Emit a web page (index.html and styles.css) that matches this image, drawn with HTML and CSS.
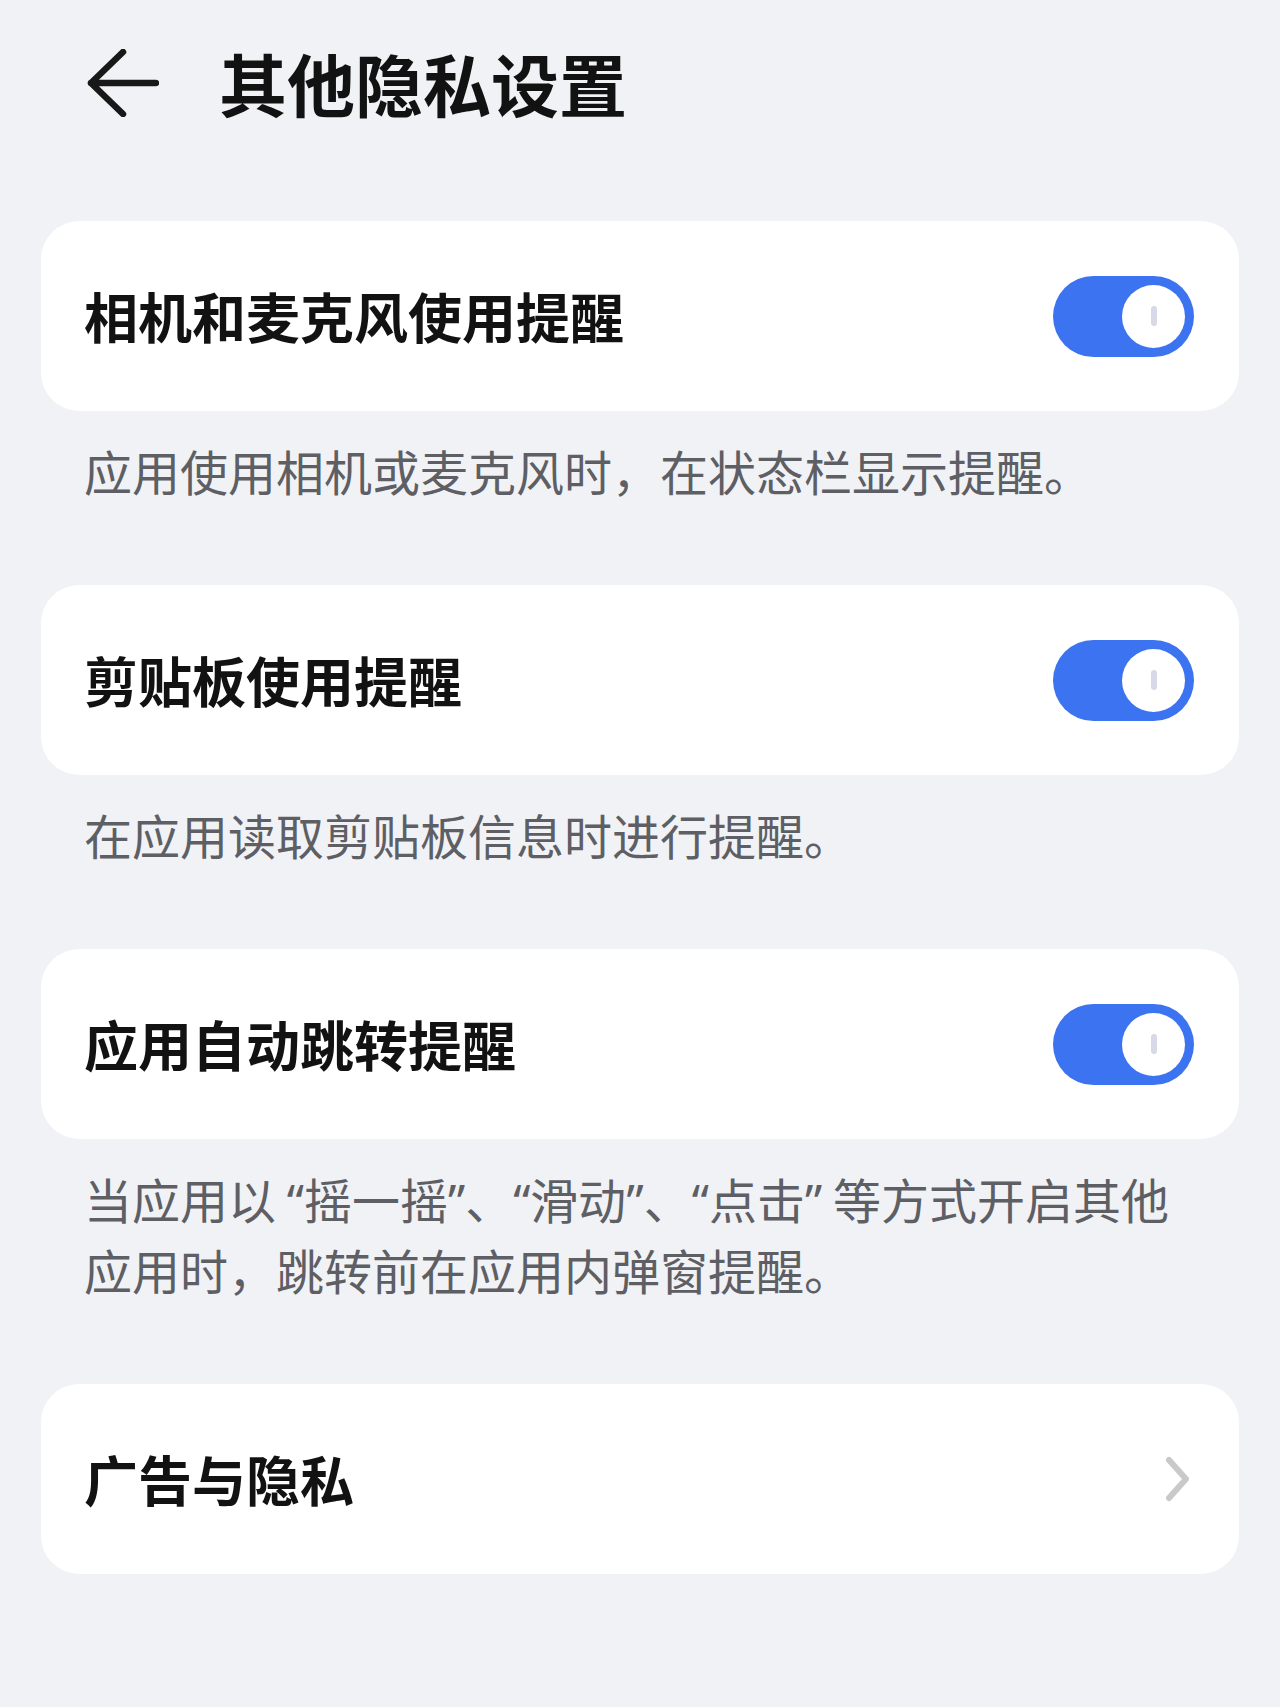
FILE: index.html
```html
<!DOCTYPE html>
<html lang="zh-CN">
<head>
    <meta charset="UTF-8">
    <meta name="viewport" content="width=device-width, initial-scale=1.0">
    <title>其他隐私设置</title>
    <link rel="stylesheet" href="styles.css">
</head>
<body>
    <div class="header">
        <div class="back">
            <svg width="72" height="68" viewBox="0 0 72 68">
                <path d="M36 3 L4 34 L36 65 M4 34 L69 34" fill="none" stroke="#181818" stroke-width="6.5" stroke-linecap="round" stroke-linejoin="round"/>
            </svg>
        </div>
        <span class="page-title">其他隐私设置</span>
    </div>

    <div class="list">
        <div class="group">
            <div class="card">
                <span class="card-title">相机和麦克风使用提醒</span>
                <div class="switch"><span class="knob"><i></i></span></div>
            </div>
            <div class="desc">应用使用相机或麦克风时，在状态栏显示提醒。</div>
        </div>

        <div class="group">
            <div class="card">
                <span class="card-title">剪贴板使用提醒</span>
                <div class="switch"><span class="knob"><i></i></span></div>
            </div>
            <div class="desc">在应用读取剪贴板信息时进行提醒。</div>
        </div>

        <div class="group">
            <div class="card">
                <span class="card-title">应用自动跳转提醒</span>
                <div class="switch"><span class="knob"><i></i></span></div>
            </div>
            <div class="desc">当应用以 <q>“摇一摇”</q>、<q>“滑动”</q>、<q>“点击”</q> 等方式开启其他<br>应用时，跳转前在应用内弹窗提醒。</div>
        </div>

        <div class="group">
            <div class="card">
                <span class="card-title">广告与隐私</span>
                <svg class="chevron" width="28" height="46" viewBox="0 0 28 46">
                    <path d="M5 4 L22 23 L5 42" fill="none" stroke="#c9c9cb" stroke-width="6" stroke-linecap="round" stroke-linejoin="round"/>
                </svg>
            </div>
        </div>
    </div>
</body>
</html>
```

FILE: styles.css
```css
/* Halaman dasar */
body {
    margin: 0;
    padding: 0;
    background-color: #f1f2f6;
    font-family: "Noto Sans CJK SC", "Noto Sans", sans-serif;
    color: #121212;
}

/* Judul atas */
.header {
    display: flex;
    align-items: center;
    height: 166px;
    padding-left: 87px;
}

.back {
    display: flex;
    width: 132px;
}

.page-title {
    font-size: 68px;
    font-weight: 700;
    line-height: 1;
}

/* Daftar kartu */
.list {
    display: flex;
    flex-direction: column;
    gap: 80px;
    margin: 55px 41px 0 41px;
}

.card {
    display: flex;
    align-items: center;
    justify-content: space-between;
    height: 190px;
    padding: 0 45px 0 43px;
    background-color: #fff;
    border-radius: 38px;
}

.card-title {
    font-size: 54px;
    font-weight: 700;
    line-height: 1;
}

.desc {
    padding: 25px 40px 0 43px;
    font-size: 48px;
    line-height: 69px;
    color: #5e5f64;
}

.desc q {
    quotes: none;
    font-family: "Noto Sans", sans-serif;
}

/* Tombol on/off */
.switch {
    display: flex;
    align-items: center;
    justify-content: flex-end;
    width: 141px;
    height: 81px;
    padding: 0 9px;
    box-sizing: border-box;
    background-color: #3b73f0;
    border-radius: 41px;
}

.knob {
    display: flex;
    align-items: center;
    justify-content: center;
    width: 63px;
    height: 63px;
    background-color: #fff;
    border-radius: 50%;
}

.knob i {
    width: 6px;
    height: 20px;
    border-radius: 3px;
    background-color: #d8d9e8;
}

.chevron {
    margin-right: 2px;
}
```
